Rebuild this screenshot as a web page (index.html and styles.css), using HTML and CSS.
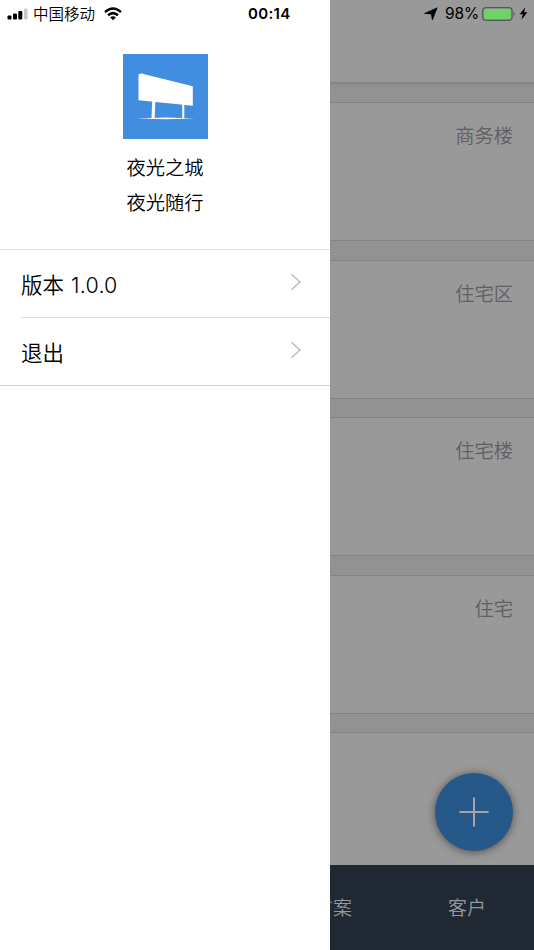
FILE: index.html
```html
<!DOCTYPE html>
<html lang="zh-CN">
<head>
<meta charset="utf-8">
<title>夜光之城</title>
<link rel="stylesheet" href="styles.css">
</head>
<body>
<div class="app">
  <aside class="drawer">
    <div class="status">
      <svg class="signal" width="21" height="12" viewBox="0 0 21 12"><rect x="0.5" y="7.5" width="4" height="4" rx="1"/><rect x="6" y="5.5" width="4" height="6" rx="1"/><rect x="11.3" y="3" width="4" height="8.5" rx="1"/><rect x="17" y="0.5" width="3.6" height="11" rx="1" fill="#c9c9c9"/></svg>
      <span class="carrier">中国移动</span>
      <svg class="wifi" width="18" height="14" viewBox="0 0 18 14"><g fill="none" stroke="#000" stroke-width="2.5"><path d="M1 5.1Q9-2 17 5.1"/><path d="M4 8.3Q9 4 14 8.3"/></g><path d="M9 13.2L6.1 10.3Q9 8 11.9 10.3Z"/></svg>
      <span class="clock">00:14</span>
    </div>
    <header class="brand">
      <svg class="logo" width="85" height="85" viewBox="0 0 85 85"><rect width="85" height="85" fill="#418de0"/><g fill="#fff"><path d="M15.5 22Q15.5 19.5 18.5 19.6L69.8 32.3V51.7L15.5 46.2Z"/><path d="M29.2 47h3.2l-.8 17h-3.1zM59.2 50.5h2.1v13.5h-2zM13 64.4L43 63.6L72 64.4L43 65.2Z"/></g></svg>
      <div class="name">夜光之城</div>
      <div class="name">夜光随行</div>
    </header>
    <nav class="menu">
      <div class="item"><span>版本 <span class="version">1.0.0</span></span><svg width="12" height="18" viewBox="0 0 12 18"><path d="M1.5 1.2L10 9L1.5 16.8"/></svg></div>
      <div class="item"><span>退出</span><svg width="12" height="18" viewBox="0 0 12 18"><path d="M1.5 1.2L10 9L1.5 16.8"/></svg></div>
    </nav>
  </aside>
  <main class="page">
    <header class="topbar">
      <div class="status right">
        <svg class="loc" width="14" height="14" viewBox="0 0 14 14"><path d="M13.2.8L8.4 13L7.2 7L.4 6.4Z" stroke="#000" stroke-width=".6"/></svg>
        <span class="percent">98%</span>
        <svg class="battery" width="34" height="14" viewBox="0 0 34 14"><rect x=".7" y=".7" width="29.4" height="12.6" rx="3.2" fill="none" stroke="#55565a" stroke-width="1.2"/><rect x="2.1" y="2.1" width="26.6" height="9.8" rx="1.8" fill="#6fd468"/><path d="M31.5 4.8Q34 7 31.5 9.2Z" fill="#55565a"/></svg>
        <svg class="bolt" width="9" height="13" viewBox="0 0 9 13"><path d="M6.3.2L.6 7.2H3.8L2.4 12.8L8.4 5.3H5.1Z"/></svg>
      </div>
    </header>
    <section class="list">
      <article class="card">商务楼</article>
      <article class="card">住宅区</article>
      <article class="card">住宅楼</article>
      <article class="card">住宅</article>
      <article class="card"></article>
    </section>
    <footer class="tabs"><span class="tab plan">方案</span><span class="tab client">客户</span></footer>
    <div class="fab"><svg width="30" height="30" viewBox="0 0 30 30"><path d="M15 .5V29.5M.5 15H29.5"/></svg></div>
  </main>
</div>
</body>
</html>
```
FILE: styles.css
```css
* { box-sizing: border-box; }
body {
  margin: 0;
  font-family: Inter, "Noto Sans CJK SC", sans-serif;
  color: #000;
}
svg { display: block; flex: none; }
.app {
  display: grid;
  grid-template-columns: 330px 204px;
  width: 534px;
  height: 950px;
  overflow: hidden;
}
.drawer { background: #fff; }
.status {
  display: flex;
  align-items: center;
  height: 27px;
  padding-left: 7px;
  font-size: 15.5px;
  line-height: 27px;
  white-space: nowrap;
}
.carrier { width: 63px; margin: 0 8px 0 5px; padding-top: 1px; font-weight: 350; }
.clock {
  margin-left: 126px;
  font-size: 15px;
  font-weight: 600;
  letter-spacing: .35px;
}
.brand {
  display: flex;
  flex-direction: column;
  align-items: center;
  height: 222px;
  padding-top: 27px;
}
.logo { margin-bottom: 12px; }
.name {
  font-size: 19.3px;
  font-weight: 350;
  line-height: 35px;
}
.menu {
  height: 137px;
  padding-left: 21px;
  border-top: 1px solid #dedee0;
  border-bottom: 1px solid #d2d2d5;
}
.item {
  display: flex;
  align-items: center;
  justify-content: space-between;
  height: 67px;
  padding-right: 28px;
  font-size: 21.5px;
  font-weight: 350;
}
.item > span { margin-bottom: 1px; }
.version { margin-left: 1px; letter-spacing: .2px; }
.item + .item { height: 68px; border-top: 1px solid #dedee0; }
.item svg {
  margin-bottom: 3px;
  fill: none;
  stroke: #bcbcc0;
  stroke-width: 1.5;
}
.page {
  position: relative;
  display: flex;
  flex-direction: column;
  overflow: hidden;
  background: #929292;
}
.topbar {
  flex: none;
  height: 83px;
  background: #999;
  border-bottom: 1px solid #818287;
  box-shadow: 0 1px 3px #7e8087;
}
.right { padding-left: 94px; }
.percent { width: 34px; margin: 0 3px 0 7px; font-size: 15.5px; letter-spacing: -.1px; }
.bolt { margin-left: 3px; }
.list {
  display: flex;
  flex: 1;
  flex-direction: column;
  gap: 18.5px;
  min-height: 0;
  padding-top: 19px;
  overflow: hidden;
}
.card {
  flex: none;
  height: 139px;
  padding: 17px 21px;
  border-top: 1px solid #828387;
  border-bottom: 1px solid #828387;
  background: #999;
  color: #606064;
  font-size: 19.3px;
  font-weight: 350;
  line-height: 32px;
  text-align: right;
}
.tabs {
  display: flex;
  flex: none;
  align-items: center;
  height: 85px;
  padding-bottom: 2px;
  background: #202833;
  color: #96989d;
  font-size: 19px;
  font-weight: 350;
}
.plan { margin-left: -16px; }
.client { margin-left: 96px; }
.fab {
  position: absolute;
  right: 21px;
  bottom: 99px;
  display: grid;
  place-items: center;
  width: 78px;
  height: 78px;
  border-radius: 50%;
  background: #26588a;
  box-shadow: 0 1px 8px rgba(0, 0, 0, .5);
}
.fab svg { margin: 0 1px 1px 0; fill: none; stroke: #a3a7ad; stroke-width: 2; }
```
